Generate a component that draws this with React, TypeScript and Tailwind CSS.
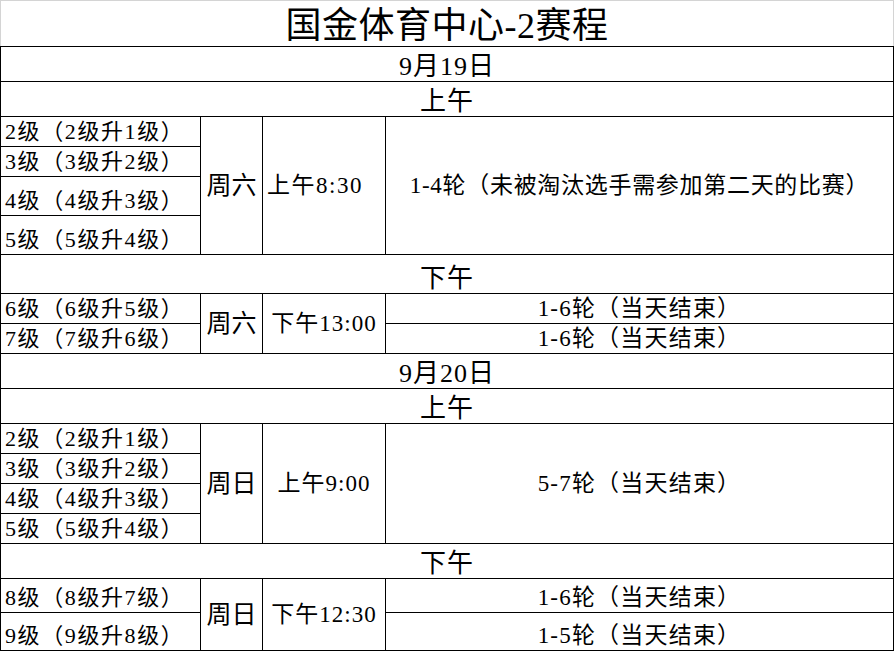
const font = "font-['Liberation_Serif','Noto_Sans_CJK_SC',serif]";

function Cell({ className = "", children }: { className?: string; children?: React.ReactNode }) {
  return <div className={`bg-white flex leading-none text-black ${className}`}>{children}</div>;
}

function Band({ text }: { text: string }) {
  return <Cell className="col-span-4 justify-center items-end pb-[1px] text-[26px] tracking-[1px]">{text}</Cell>;
}

function Grade({ text }: { text: string }) {
  return <Cell className="items-end pl-[4px] pb-[3px] text-[22px] tracking-[1.6px]">{text}</Cell>;
}

function Day({ text, span }: { text: string; span: string }) {
  return <Cell className={`${span} items-center justify-center text-[25px]`}>{text}</Cell>;
}

function Round({ text }: { text: string }) {
  return <Cell className="items-end justify-center pb-[3px] text-[23px] tracking-[1.2px]">{text}</Cell>;
}

export default function App() {
  return (
    <div className={`w-[894px] h-[651px] bg-white ${font}`}>
      <div className="h-[46px] border-t border-l border-r border-[#d4d4d4] flex items-end justify-center pb-[2px] text-[36px] leading-none text-black tracking-[0.5px]">
        国金体育中心-2赛程
      </div>
      <div className="grid bg-black gap-px p-px grid-cols-[199px_61px_122px_507px] grid-rows-[34px_34px_29px_29px_38px_38px_38px_29px_29px_34px_34px_29px_29px_29px_29px_34px_33px_37px]">
        <Band text="9月19日" />
        <Band text="上午" />

        <Grade text="2级（2级升1级）" />
        <Day span="row-span-4" text="周六" />
        <Cell className="row-span-4 items-center pl-[4px] text-[23px] tracking-[1.5px]">上午8:30</Cell>
        <Cell className="row-span-4 items-center justify-center text-[23px] tracking-[0.7px]">1-4轮（未被淘汰选手需参加第二天的比赛）</Cell>
        <Grade text="3级（3级升2级）" />
        <Grade text="4级（4级升3级）" />
        <Grade text="5级（5级升4级）" />

        <Band text="下午" />

        <Grade text="6级（6级升5级）" />
        <Day span="row-span-2" text="周六" />
        <Cell className="row-span-2 items-center justify-center text-[23px] tracking-[1px]">下午13:00</Cell>
        <Round text="1-6轮（当天结束）" />
        <Grade text="7级（7级升6级）" />
        <Round text="1-6轮（当天结束）" />

        <Band text="9月20日" />
        <Band text="上午" />

        <Grade text="2级（2级升1级）" />
        <Day span="row-span-4" text="周日" />
        <Cell className="row-span-4 items-center justify-center text-[23px] tracking-[1px]">上午9:00</Cell>
        <Cell className="row-span-4 items-center justify-center text-[23px] tracking-[1.2px]">5-7轮（当天结束）</Cell>
        <Grade text="3级（3级升2级）" />
        <Grade text="4级（4级升3级）" />
        <Grade text="5级（5级升4级）" />

        <Band text="下午" />

        <Grade text="8级（8级升7级）" />
        <Day span="row-span-2" text="周日" />
        <Cell className="row-span-2 items-center justify-center text-[23px] tracking-[1px]">下午12:30</Cell>
        <Round text="1-6轮（当天结束）" />
        <Grade text="9级（9级升8级）" />
        <Round text="1-5轮（当天结束）" />
      </div>
    </div>
  );
}
